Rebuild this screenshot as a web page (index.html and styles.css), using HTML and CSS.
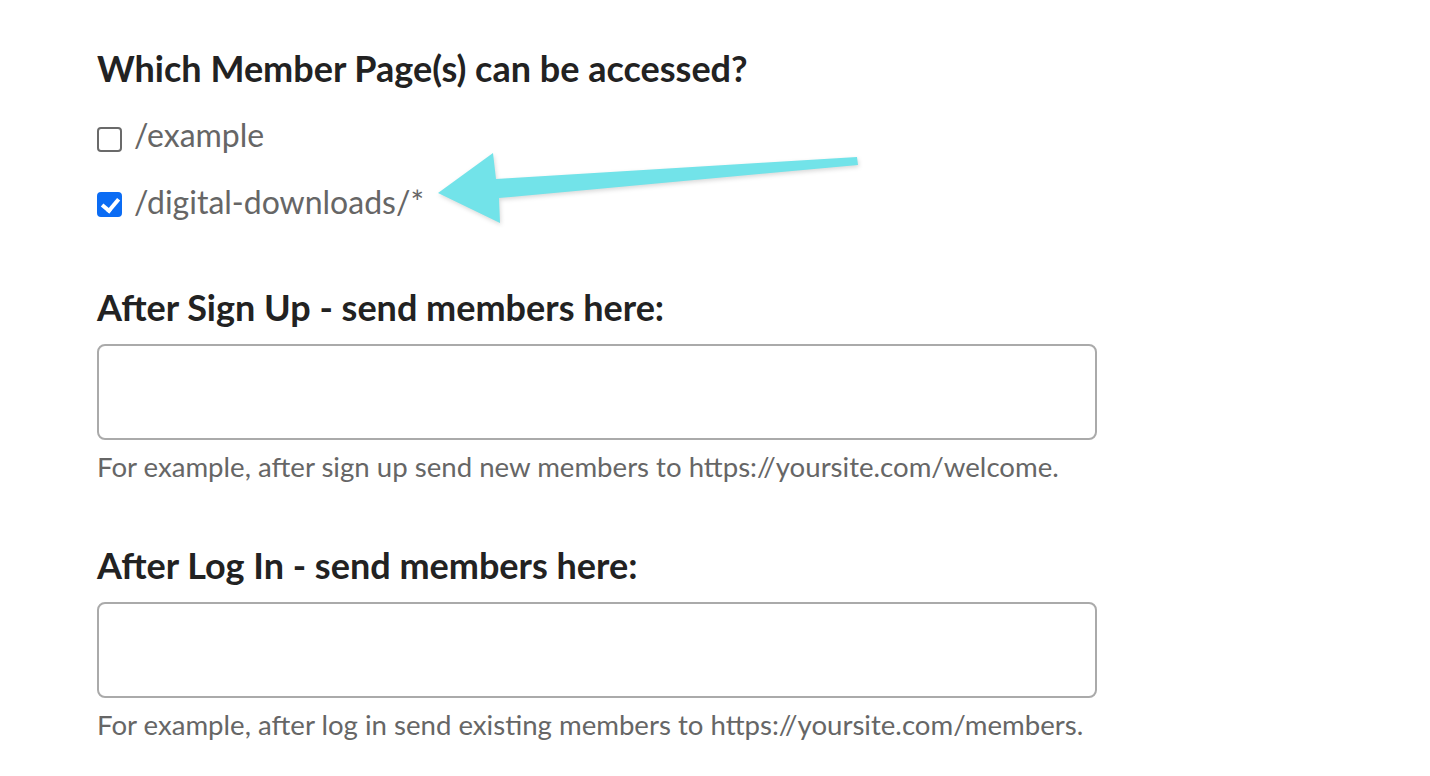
FILE: index.html
```html
<!DOCTYPE html>
<html lang="en">
<head>
    <meta charset="UTF-8">
    <title>Member access</title>
    <link rel="stylesheet" href="styles.css">
</head>
<body>
    <main class="form">
        <section class="field">
            <h2>Which Member Page(s) can be accessed?</h2>
            <div class="options">
                <label class="option">
                    <input type="checkbox">
                    <span>/example</span>
                </label>
                <label class="option">
                    <input type="checkbox" checked>
                    <span>/digital-downloads/*</span>
                </label>
            </div>
            <svg class="arrow" width="440" height="100" viewBox="0 0 440 100">
                <polygon points="8,53 63,13 66,39 427,17 428,25 69,58 70,83" fill="#72e3e9"/>
            </svg>
        </section>

        <section class="field">
            <h2>After Sign Up - send members here:</h2>
            <input type="text" class="text-input">
            <p class="help">For example, after sign up send new members to https://yoursite.com/welcome.</p>
        </section>

        <section class="field">
            <h2>After Log In - send members here:</h2>
            <input type="text" class="text-input">
            <p class="help">For example, after log in send existing members to https://yoursite.com/members.</p>
        </section>
    </main>
</body>
</html>
```

FILE: styles.css
```css
body {
    font-family: Lato, "Open Sans", sans-serif;
    background-color: #fff;
    color: #222;
    margin: 0;
    padding: 0;
}

.form {
    padding: 47px 0 0 97px;
    width: 1000px;
}

.field {
    position: relative;
    margin-bottom: 61px;
}

.field h2 {
    font-size: 36px;
    font-weight: bold;
    line-height: 1.2;
    margin: 0 0 15px 0;
    color: #222;
}

.options {
    display: flex;
    flex-direction: column;
    gap: 28px;
    margin-top: 26px;
    padding-bottom: 4px;
}

.option {
    display: flex;
    align-items: flex-start;
    gap: 12px;
    font-size: 32px;
    color: #666;
    line-height: 1.2;
}

.option input {
    appearance: none;
    -webkit-appearance: none;
    width: 25px;
    height: 25px;
    margin: 11px 0 0 0;
    border: 2px solid #6a6a6a;
    border-radius: 4px;
    box-sizing: border-box;
    position: relative;
    background: #fff;
}

.option input:checked {
    margin-top: 9px;
    background: #0b6cf4;
    border-color: #0b6cf4;
}

.option input:checked::after {
    content: "";
    position: absolute;
    left: 6px;
    top: 1px;
    width: 7px;
    height: 13px;
    border: solid #fff;
    border-width: 0 4px 4px 0;
    transform: rotate(40deg);
}

.arrow {
    position: absolute;
    left: 333px;
    top: 93px;
    filter: drop-shadow(1px 2px 2px rgba(0, 0, 0, 0.15));
}

.text-input {
    display: block;
    width: 1000px;
    height: 96px;
    box-sizing: border-box;
    border: 2px solid #aaa;
    border-radius: 8px;
    font-size: 24px;
    padding: 0 16px;
    margin: 0;
}

.help {
    font-size: 27.6px;
    color: #666;
    margin: 10px 0 0 0;
    line-height: 1.2;
}
```
